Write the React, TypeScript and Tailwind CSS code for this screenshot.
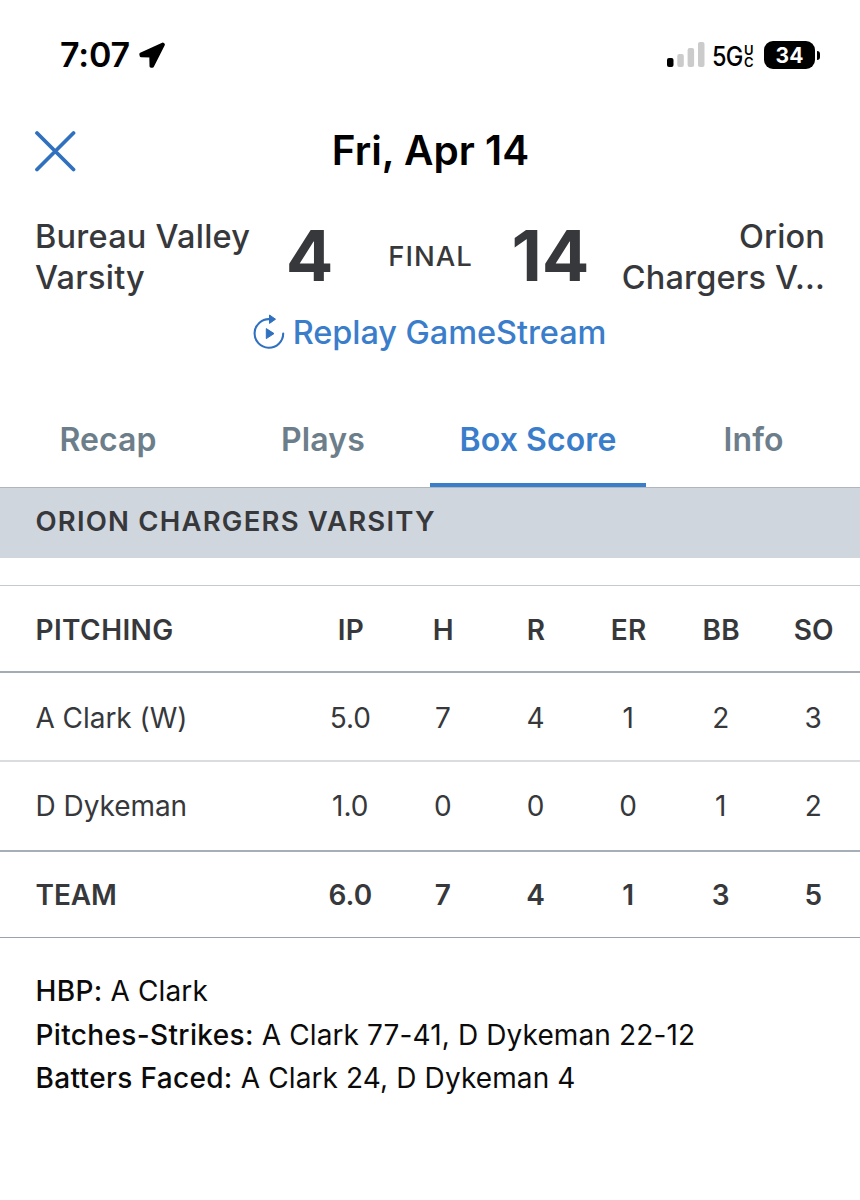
const columns = ["IP", "H", "R", "ER", "BB", "SO"];

const rows = [
  { name: "A Clark (W)", values: ["5.0", "7", "4", "1", "2", "3"] },
  { name: "D Dykeman", values: ["1.0", "0", "0", "0", "1", "2"] },
];

const team = ["6.0", "7", "4", "1", "3", "5"];

const notes = [
  { label: "HBP:", text: "A Clark" },
  { label: "Pitches-Strikes:", text: "A Clark 77-41, D Dykeman 22-12" },
  { label: "Batters Faced:", text: "A Clark 24, D Dykeman 4" },
];

const tabs = [
  { label: "Recap", active: false },
  { label: "Plays", active: false },
  { label: "Box Score", active: true },
  { label: "Info", active: false },
];

function StatusBar() {
  return (
    <div className="flex h-[110px] items-center justify-between pr-[40px] pl-[60px] text-black">
      <div className="flex items-center">
        <span className="w-[78px] text-[34px] leading-none font-semibold tracking-[-0.2px]">7:07</span>
        <svg width="28" height="28" viewBox="0 0 28 28" className="block">
          <path
            d="M24.8 3 L2.8 13.2 L3.2 14.8 L12.8 15 L13 25.2 L14.4 25.2 L25.4 3.6 Z"
            fill="currentColor"
            stroke="currentColor"
            strokeWidth="3"
            strokeLinejoin="round"
          />
        </svg>
      </div>
      <div className="flex items-center">
        <svg width="38" height="26" viewBox="0 0 38 26" className="block">
          <rect x="0" y="16" width="6.5" height="9" rx="2" fill="#000" />
          <rect x="10.3" y="12" width="6.5" height="13" rx="2" fill="#cbcbcb" />
          <rect x="20.6" y="6" width="6.5" height="19" rx="2" fill="#cbcbcb" />
          <rect x="31" y="0" width="6.5" height="25" rx="2" fill="#cbcbcb" />
        </svg>
        <span className="ml-[7px] w-[32px] origin-left scale-x-[0.87] pt-[2px] text-[27px] leading-none font-medium tracking-[-0.8px]">
          5G
        </span>
        <span className="flex w-[12px] flex-col pt-px text-[13px] leading-[12px] font-semibold">
          <span>U</span>
          <span>C</span>
        </span>
        <span className="ml-[8px] flex h-[28px] w-[51px] items-center justify-center rounded-[9px] bg-black text-[21px] leading-none font-bold text-white">
          34
        </span>
        <span className="ml-[2px] h-[9px] w-[3px] rounded-r-full bg-black" />
      </div>
    </div>
  );
}

function ReplayIcon() {
  return (
    <svg width="32" height="36" viewBox="0 0 32 36" fill="none" className="mb-[2px] block">
      <path d="M17 5.2 A14.3 14.3 0 1 0 30.2 19.5" stroke="#2f70bf" strokeWidth="2.1" strokeLinecap="round" />
      <path d="M16.5 1 L22.5 5.2 L16.5 9.4 Z" fill="#2f70bf" stroke="#2f70bf" strokeWidth="1" strokeLinejoin="round" />
      <path d="M13.3 14.6 L21 19.6 L13.3 24.6 Z" fill="#2f70bf" stroke="#2f70bf" strokeWidth="1" strokeLinejoin="round" />
    </svg>
  );
}

export default function App() {
  return (
    <div className="flex h-[1200px] w-[860px] flex-col overflow-hidden bg-white font-['Inter','Liberation_Sans',sans-serif] text-[#37383b]">
      <StatusBar />

      <header className="grid h-[82px] grid-cols-[1fr_auto_1fr] items-center px-[34px] text-black">
        <svg width="42" height="42" viewBox="0 0 42 42" className="block">
          <path d="M3 3 L39.5 39.5 M39.5 3 L3 39.5" stroke="#2f70bf" strokeWidth="3.8" strokeLinecap="round" />
        </svg>
        <h1 className="pt-px pl-px text-[40.5px] leading-none font-semibold">Fri, Apr 14</h1>
      </header>

      <section className="flex h-[130px] items-center px-[36px] text-[32.5px] leading-[41px] font-[450]">
        <div className="-ml-px w-[241px] tracking-[0.23px]">
          Bureau Valley
          <br />
          Varsity
        </div>
        <div className="flex items-center pb-[2px]">
          <span className="w-[66px] pl-px text-center text-[70.5px] leading-none font-bold">4</span>
          <span className="w-[164px] pl-[13px] text-center text-[27.5px] font-medium tracking-[1px]">FINAL</span>
          <span className="w-[88px] pl-px text-center text-[70.5px] leading-none font-bold">14</span>
        </div>
        <div className="-mr-px w-[231px] text-right tracking-[0.15px]">
          Orion
          <br />
          Chargers V...
        </div>
      </section>

      <div className="flex h-[22px] items-center justify-center pr-px text-[#3a7dcb]">
        <ReplayIcon />
        <span className="ml-[8px] text-[32.5px] leading-none font-medium tracking-[-0.06px]">Replay GameStream</span>
      </div>

      <nav className="mt-[49px] grid h-[94px] grid-cols-[215px_215px_216px_214px] text-[32px] font-semibold tracking-[0.1px]">
        {tabs.map((tab) => (
          <div
            key={tab.label}
            className={
              tab.active
                ? "flex items-center justify-center border-b-4 border-[#3a7dcb] pt-[4px] text-[#3a7dcb]"
                : "flex items-center justify-center border-b-4 border-transparent pt-[4px] pl-px text-[#6d7e8b]"
            }
          >
            {tab.label}
          </div>
        ))}
      </nav>

      <div className="flex h-[71px] items-center border-t border-[#afb6bc] bg-[#d0d6dd] px-[35.5px] pb-[3px] text-[27.5px] font-semibold tracking-[1.2px]">
        ORION CHARGERS VARSITY
      </div>

      <div className="mt-[27px] border-t border-[#c5cad0] text-[28px]">
        <div className="grid h-[87px] grid-cols-[268.5px_repeat(6,92.6px)] items-center border-b-2 border-[#a4abb2] pt-[2px] pl-[35.5px] font-semibold">
          <span className="tracking-[0.4px]">PITCHING</span>
          {columns.map((c) => (
            <span key={c} className="pl-px text-center tracking-[0.2px]">{c}</span>
          ))}
        </div>
        {rows.map((row, i) => (
          <div
            key={row.name}
            className={
              i === 0
                ? "grid h-[89px] grid-cols-[268.5px_repeat(6,92.6px)] items-center border-b-2 border-[#d9dddf] pt-[2px] pl-[35.5px]"
                : "grid h-[90px] grid-cols-[268.5px_repeat(6,92.6px)] items-center border-b-2 border-[#a6afb8] pl-[35.5px]"
            }
          >
            <span className="tracking-[-0.05px]">{row.name}</span>
            {row.values.map((v, j) => (
              <span key={j} className="text-center">{v}</span>
            ))}
          </div>
        ))}
        <div className="grid h-[86px] grid-cols-[268.5px_repeat(6,92.6px)] items-center border-b border-[#9aa3ac] pl-[35.5px] font-semibold">
          <span className="tracking-[-0.1px]">TEAM</span>
          {team.map((v, j) => (
            <span key={j} className="text-center">{v}</span>
          ))}
        </div>
      </div>

      <div className="mt-[32px] px-[35.5px] text-[28px] leading-[43.5px] tracking-[0.12px] text-[#0b0b0c]">
        {notes.map((n) => (
          <p key={n.label}>
            <span className="font-medium tracking-[0.35px]">{n.label}</span> {n.text}
          </p>
        ))}
      </div>
    </div>
  );
}
